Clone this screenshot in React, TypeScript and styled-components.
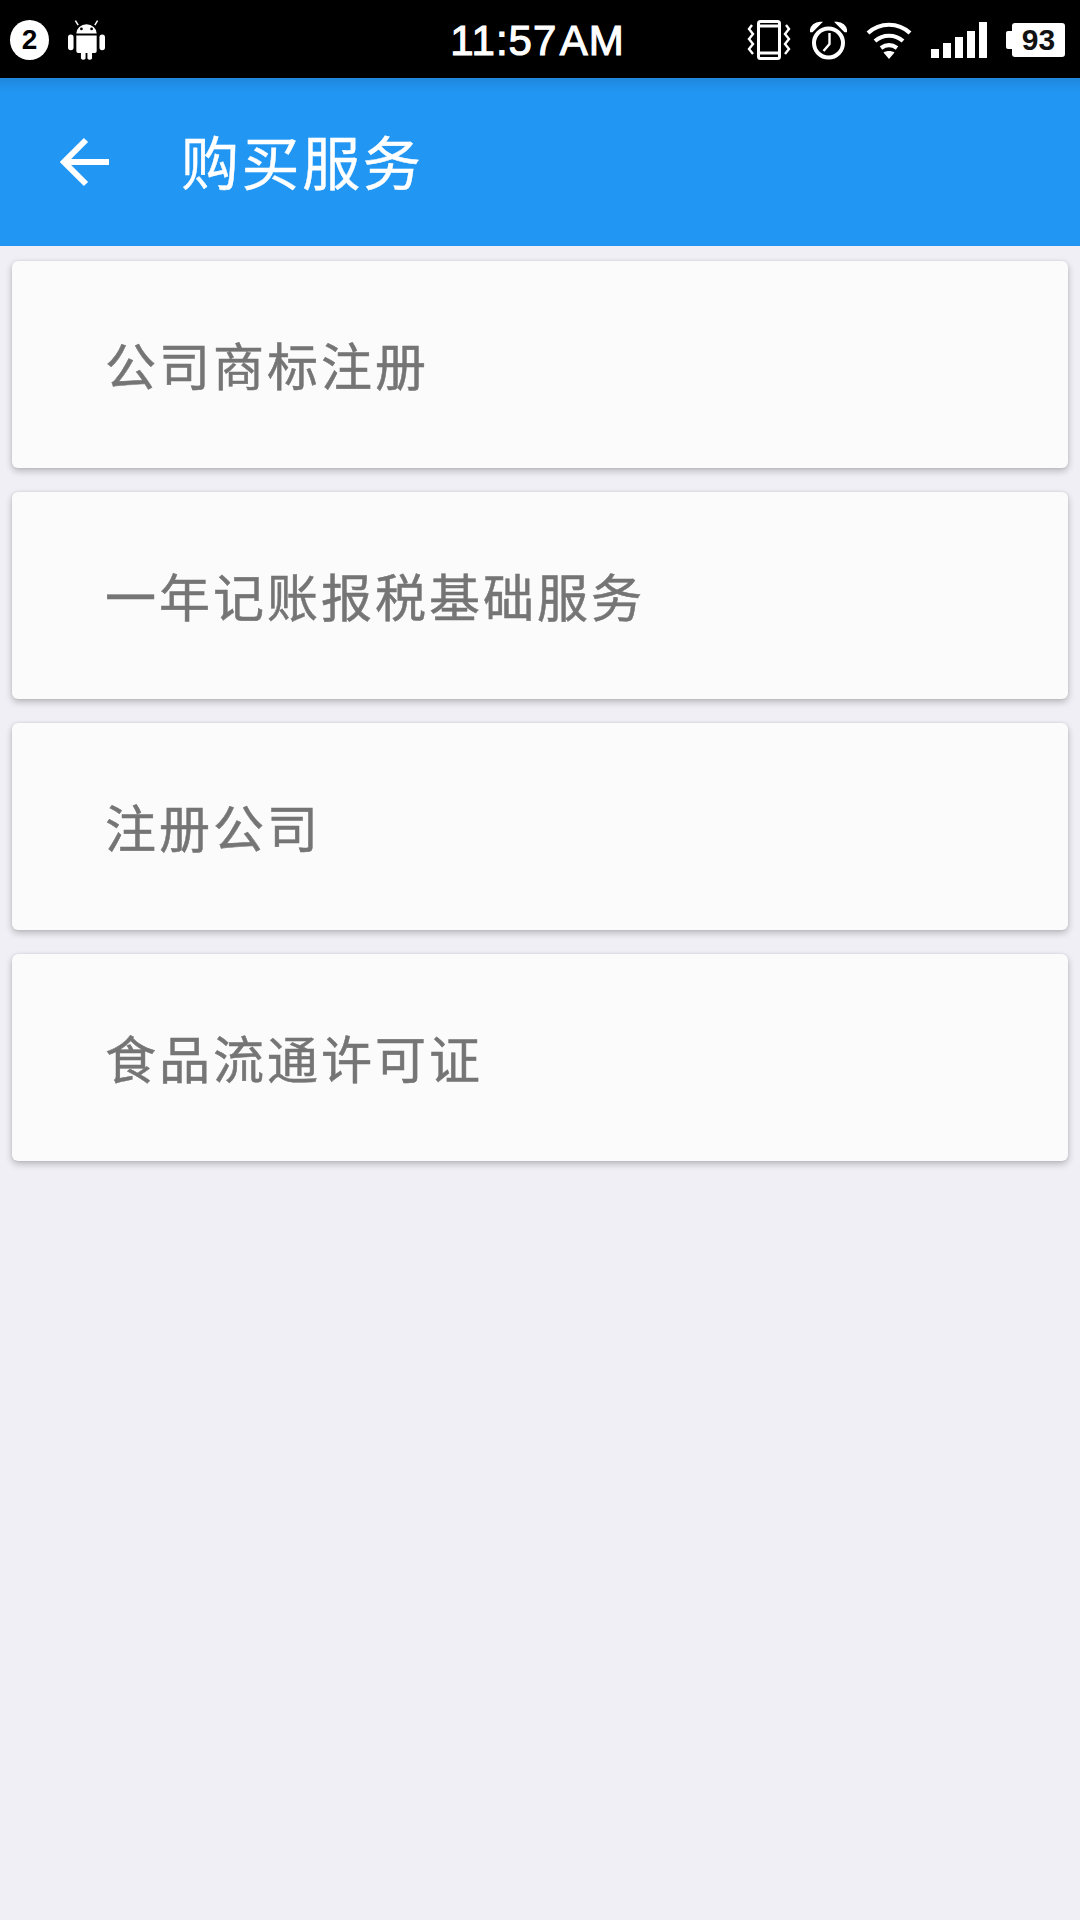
import React from "react";
import styled, { createGlobalStyle } from "styled-components";

const Global = createGlobalStyle`
  html, body { margin: 0; padding: 0; background: #efeff5; }
  * { box-sizing: border-box; }
`;

const Page = styled.div`
  width: 1080px;
  height: 1920px;
  background: #efeff5;
  overflow: hidden;
  display: flex;
  flex-direction: column;
  font-family: "Noto Sans CJK SC", "Liberation Sans", sans-serif;
`;

const StatusBar = styled.div`
  height: 78px;
  flex: none;
  background: #000;
  color: #fff;
  display: grid;
  grid-template-columns: 1fr auto 1fr;
  align-items: center;
  padding: 0 15px 0 10px;
`;

const StatusLeft = styled.div`
  display: flex;
  align-items: center;
  gap: 19px;
`;

const StatusRight = styled.div`
  display: flex;
  align-items: center;
  justify-content: flex-end;
  gap: 19px;
`;

const Badge = styled.div`
  width: 39px;
  height: 40px;
  border-radius: 50%;
  background: #fff;
  color: #000;
  font: 700 28px/40px "Liberation Sans", sans-serif;
  text-align: center;
`;

const Clock = styled.div`
  font: 400 42px/78px "Liberation Sans", sans-serif;
  -webkit-text-stroke: 1.1px #fff;
  letter-spacing: 1px;
  word-spacing: -8px;
  padding-top: 2px;
`;

const Battery = styled.div`
  position: relative;
  width: 53px;
  height: 34px;
  background: #fff;
  border-radius: 3px;
  margin-left: 6px;
  color: #111;
  font: 700 30px/34px "Liberation Sans", sans-serif;
  text-align: center;
  &::before {
    content: "";
    position: absolute;
    left: -6px;
    top: 8px;
    width: 6px;
    height: 18px;
    background: #fff;
    border-radius: 2px 0 0 2px;
  }
`;

const AppBar = styled.header`
  height: 168px;
  flex: none;
  background: linear-gradient(#1f86dc 0, #2196f3 14px);
  display: flex;
  align-items: center;
  padding-left: 59px;
  color: #fff;
`;

const BackButton = styled.div`
  width: 50px;
  height: 50px;
  display: flex;
  margin-right: 72px;
`;

const Title = styled.h1`
  margin: 0 0 4px;
  font-size: 58px;
  font-weight: 400;
  letter-spacing: 2.6px;
  line-height: 1;
  -webkit-text-stroke: 0.4px #fff;
`;

const List = styled.main`
  display: flex;
  flex-direction: column;
  gap: 24px;
  padding: 15px 12px 0;
`;

const Card = styled.div`
  height: 207px;
  background: #fbfbfc;
  border-radius: 6px;
  box-shadow: 0 3px 7px rgba(0, 0, 0, 0.24), 0 0 3px rgba(0, 0, 0, 0.08);
  display: flex;
  align-items: center;
  padding: 0 0 2px 93px;
  color: #757575;
  font-size: 51px;
  font-weight: 400;
  letter-spacing: 3px;
  -webkit-text-stroke: 0.5px #757575;
`;

const AndroidIcon = () => (
  <svg width="37" height="42" viewBox="0 0 40 44" fill="#fff">
    <path d="M9 15a11 10 0 0 1 22 0z" />
    <path d="M11 6 8 1M29 6l3-5" stroke="#fff" strokeWidth="1.6" />
    <circle cx="14.500" cy="10" r="1.500" fill="#000" />
    <circle cx="25.500" cy="10" r="1.500" fill="#000" />
    <path d="M9 17h22v17a2 2 0 0 1-2 2h-3v6a3 3 0 0 1-5 0v-6h-2v6a3 3 0 0 1-5 0v-6h-3a2 2 0 0 1-2-2z" />
    <rect x="0" y="16" width="6" height="17" rx="3" />
    <rect x="34" y="16" width="6" height="17" rx="3" />
  </svg>
);

const VibrateIcon = () => (
  <svg width="44" height="40" viewBox="0 0 44 40" fill="none" stroke="#fff">
    <rect x="11.500" y="1.500" width="21" height="37" rx="2" strokeWidth="3" />
    <path d="M11 6h22M11 33h22" strokeWidth="3" />
    <path d="M5 5 2 9l4 5-4 5 4 5-4 5 4 5M39 5l3 4-4 5 4 5-4 5 4 5-4 5" strokeWidth="2.400" />
  </svg>
);

const AlarmIcon = () => (
  <svg width="37" height="39" viewBox="0 0 37 39" fill="none" stroke="#fff">
    <circle cx="18.500" cy="22" r="14.500" strokeWidth="4" />
    <path d="M19.500 12v11l-6 7" strokeWidth="2.400" />
    <path d="M1 10a9 9 0 0 1 9-8l-8 8zM36 10a9 9 0 0 0-9-8l8 8z" fill="#fff" strokeWidth="2.500" />
  </svg>
);

const WifiIcon = () => (
  <svg width="46" height="37" viewBox="0 0 46 37" fill="none" stroke="#fff" strokeWidth="4.200">
    <path d="M2 11c12-11 30-11 42 0M9 19c8-7 20-7 28 0M15 26c5-3.500 11-3.500 16 0" />
    <path d="M17.500 30.500c3-2 8-2 11 0L23 37z" fill="#fff" stroke="none" />
  </svg>
);

const SignalIcon = () => (
  <svg width="56" height="36" viewBox="0 0 56 36" fill="#fff">
    <rect x="0" y="27" width="8" height="9" />
    <rect x="12" y="21" width="8" height="15" />
    <rect x="24" y="15" width="8" height="21" />
    <rect x="36" y="9" width="8" height="27" />
    <rect x="48" y="0" width="8" height="36" />
  </svg>
);

const ITEMS = ["公司商标注册", "一年记账报税基础服务", "注册公司", "食品流通许可证"];

export default function App() {
  return (
    <Page>
      <Global />
      <StatusBar>
        <StatusLeft>
          <Badge>2</Badge>
          <AndroidIcon />
        </StatusLeft>
        <Clock>11:57 AM</Clock>
        <StatusRight>
          <VibrateIcon />
          <AlarmIcon />
          <WifiIcon />
          <SignalIcon />
          <Battery>93</Battery>
        </StatusRight>
      </StatusBar>
      <AppBar>
        <BackButton>
          <svg width="50" height="50" viewBox="0 0 50 50" fill="none" stroke="#fff" strokeWidth="6">
            <path d="M50 25H5M27 3 5 25l22 22" />
          </svg>
        </BackButton>
        <Title>购买服务</Title>
      </AppBar>
      <List>
        {ITEMS.map((t) => (
          <Card key={t}>{t}</Card>
        ))}
      </List>
    </Page>
  );
}
